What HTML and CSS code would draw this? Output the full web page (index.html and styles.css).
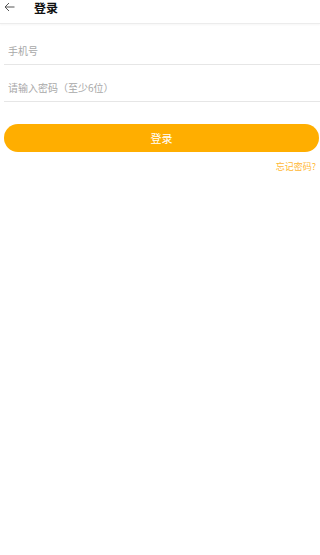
FILE: index.html
```html
<!DOCTYPE html>
<html lang="zh-CN">
<head>
    <meta charset="UTF-8">
    <meta name="viewport" content="width=device-width, initial-scale=1.0">
    <title>登录</title>
    <link rel="stylesheet" href="styles.css">
</head>
<body>
    <header class="top-bar">
        <span class="back-btn">
            <svg width="11" height="10" viewBox="0 0 11 10" fill="none" stroke="#555" stroke-width="1">
                <path d="M10.5 5H1M5 1L1 5l4 4"/>
            </svg>
        </span>
        <h1 class="title">登录</h1>
    </header>

    <form class="login-form">
        <div class="field">
            <input type="tel" placeholder="手机号">
        </div>
        <div class="field">
            <input type="password" placeholder="请输入密码（至少6位）">
        </div>
        <button type="button" class="login-btn">登录</button>
        <div class="forgot-row">
            <a href="#" class="forgot">忘记密码?</a>
        </div>
    </form>
</body>
</html>
```

FILE: styles.css
```css
:root {
    --primary: #ffae00;
    --line: #e6e6e6;
    --muted: #a8a8a8;
}

* {
    margin: 0;
    padding: 0;
    box-sizing: border-box;
    font-family: 'Noto Sans CJK SC', 'Noto Sans', sans-serif;
}

body {
    background: #fff;
    color: #222;
}

.top-bar {
    height: 24px;
    display: flex;
    align-items: flex-start;
    border-bottom: 1px solid #ececec;
    box-shadow: 0 1px 2px rgba(0, 0, 0, 0.04);
}

.back-btn {
    display: flex;
    width: 34px;
    padding: 2px 0 0 4px;
}

.title {
    font-size: 12px;
    font-weight: 700;
    line-height: 15px;
    color: #111;
}

.login-form {
    padding: 4px 0 0 4px;
}

.field {
    height: 37px;
    border-bottom: 1px solid var(--line);
    display: flex;
    align-items: center;
    padding-top: 9px;
}

.field input {
    border: none;
    outline: none;
    width: 100%;
    padding-left: 4px;
    font-size: 10px;
    color: #333;
    background: transparent;
}

.field input::placeholder {
    color: var(--muted);
}

.login-btn {
    display: block;
    width: 315px;
    height: 28px;
    margin-top: 22px;
    border: none;
    border-radius: 14px;
    background: var(--primary);
    color: #fff;
    font-size: 11px;
    cursor: pointer;
}

.forgot-row {
    display: flex;
    justify-content: flex-end;
    padding: 8px 4px 0 0;
}

.forgot {
    font-size: 9px;
    color: #ffb733;
    text-decoration: none;
}
```
